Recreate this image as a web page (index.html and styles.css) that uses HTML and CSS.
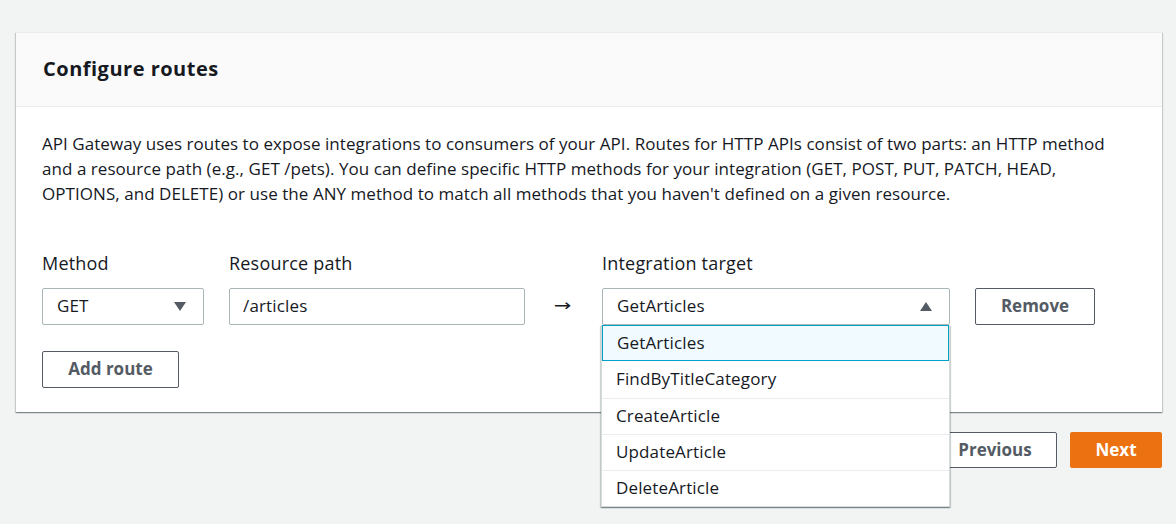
FILE: index.html
```html
<!DOCTYPE html>
<html lang="en">
<head>
<meta charset="utf-8">
<title>Configure routes</title>
<link rel="stylesheet" href="styles.css">
</head>
<body>
<div class="page">
  <section class="card">
    <header class="card-header">
      <h2>Configure routes</h2>
    </header>
    <div class="card-body">
      <p class="desc">API Gateway uses routes to expose integrations to consumers of your API. Routes for HTTP APIs consist of two parts: an HTTP method<br>and a resource path (e.g., GET /pets). You can define specific HTTP methods for your integration (GET, POST, PUT, PATCH, HEAD,<br>OPTIONS, and DELETE) or use the ANY method to match all methods that you haven't defined on a given resource.</p>

      <div class="route-grid">
        <div class="label">Method</div>
        <div class="label">Resource path</div>
        <div></div>
        <div class="label">Integration target</div>
        <div></div>

        <div class="select">
          <span>GET</span>
          <svg class="caret" width="12" height="9" viewBox="0 0 12 9"><polygon points="0,0 12,0 6,9" fill="#545b64"/></svg>
        </div>
        <div class="input"><span>/articles</span></div>
        <div class="arrow">→</div>
        <div class="select-wrap">
          <div class="select open">
            <span>GetArticles</span>
            <svg class="caret" width="12" height="9" viewBox="0 0 12 9"><polygon points="0,9 12,9 6,0" fill="#545b64"/></svg>
          </div>
          <ul class="dropdown">
            <li class="opt selected">GetArticles</li>
            <li class="opt">FindByTitleCategory</li>
            <li class="opt">CreateArticle</li>
            <li class="opt">UpdateArticle</li>
            <li class="opt">DeleteArticle</li>
          </ul>
        </div>
        <button class="btn">Remove</button>
      </div>

      <button class="btn add">Add route</button>
    </div>
  </section>

  <div class="footer">
    <button class="btn prev">Previous</button>
    <button class="btn primary">Next</button>
  </div>
</div>
</body>
</html>
```

FILE: styles.css
```css
* { box-sizing: border-box; }
html, body {
  margin: 0;
  padding: 0;
  background: #f2f3f3;
  font-family: "Open Sans", "Noto Sans", Arial, sans-serif;
  color: #16191f;
}
.page {
  width: 1176px;
  height: 524px;
  padding: 32px 14px 0 16px;
  overflow: hidden;
}
.card {
  background: #fff;
  width: 1146px;
  box-shadow: 0 1px 1px 0 rgba(0,28,36,.3), 1px 1px 1px 0 rgba(0,28,36,.15), -1px 1px 1px 0 rgba(0,28,36,.15);
  border-top: 1px solid #eaeded;
}
.card-header {
  background: #fafafa;
  border-bottom: 1px solid #eaeded;
  height: 74px;
  padding: 0 26px 0 27px;
  display: flex;
  align-items: center;
}
.card-header h2 {
  margin: 0;
  font-size: 20px;
  font-weight: 700;
  letter-spacing: 0.5px;
  line-height: 26px;
  padding-bottom: 1px;
}
.card-body {
  padding: 24px 26px 24px 26px;
}
.desc {
  margin: 0;
  font-size: 17px;
  letter-spacing: 0.05px;
  line-height: 25px;
  white-space: nowrap;
}
.route-grid {
  margin-top: 45px;
  display: grid;
  grid-template-columns: 162px 296px 27px 348px 120px;
  column-gap: 25px;
  row-gap: 12px;
  align-items: center;
}
.label {
  font-size: 18px;
  letter-spacing: 0.2px;
  line-height: 25px;
}
.select, .input {
  height: 37px;
  border: 1px solid #aab7b8;
  border-radius: 2px;
  background: #fff;
  display: flex;
  align-items: center;
  justify-content: space-between;
  padding: 0 17px 2px 14px;
  font-size: 17px;
  letter-spacing: 0.15px;
}
.input { padding-left: 13px; }
.caret { display: block; margin-top: 2px; }
.arrow {
  text-align: center;
  font-family: "DejaVu Sans", sans-serif;
  font-size: 21px;
  line-height: 1;
  transform: scaleY(0.8);
  padding-right: 2px;
  padding-bottom: 2px;
}
.select-wrap { position: relative; }
.dropdown {
  position: absolute;
  top: 100%;
  left: -1px;
  width: 349px;
  margin: 0;
  padding: 0;
  list-style: none;
  background: #fff;
  border: 1px solid #d5dbdb;
  border-top: none;
  box-shadow: 0 1px 1px 0 rgba(0,28,36,.3), 1px 1px 1px 0 rgba(0,28,36,.15), -1px 1px 1px 0 rgba(0,28,36,.15);
  z-index: 10;
}
.opt {
  height: 36.25px;
  display: flex;
  align-items: center;
  padding: 0 14px 2px;
  font-size: 17px;
  letter-spacing: 0.14px;
  border-top: 1px solid #eaeded;
}
.opt:first-child { border-top: none; }
.opt.selected {
  background: #f1faff;
  border: 1px solid #00a1c9;
  padding-left: 14px;
}
.opt.selected + .opt { border-top: none; }
.btn {
  font-family: inherit;
  height: 37px;
  border: 1px solid #545b64;
  border-radius: 2px;
  background: #fff;
  color: #545b64;
  font-size: 17px;
  font-weight: 700;
  padding: 0 18px;
  padding-bottom: 2px;
  cursor: pointer;
}
.add {
  margin-top: 26px;
  width: 137px;
}
.footer {
  margin-top: 20px;
  display: flex;
  justify-content: flex-end;
  gap: 13px;
  width: 1146px;
}
.footer .btn { height: 36px; }
.prev { width: 124px; }
.primary {
  width: 92px;
  background: #ec7211;
  border-color: #ec7211;
  color: #fff;
}
```
